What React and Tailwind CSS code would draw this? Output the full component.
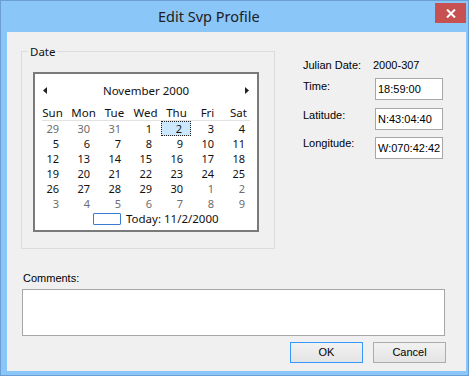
import React from "react";

const calFont = { fontFamily: '"Noto Sans", "Open Sans", sans-serif' };
const sysFont = { fontFamily: '"Liberation Sans", Arial, sans-serif' };

const dayNames = ["Sun", "Mon", "Tue", "Wed", "Thu", "Fri", "Sat"];

const weeks = [
  [[29, 1], [30, 1], [31, 1], [1, 0], [2, 2], [3, 0], [4, 0]],
  [[5, 0], [6, 0], [7, 0], [8, 0], [9, 0], [10, 0], [11, 0]],
  [[12, 0], [13, 0], [14, 0], [15, 0], [16, 0], [17, 0], [18, 0]],
  [[19, 0], [20, 0], [21, 0], [22, 0], [23, 0], [24, 0], [25, 0]],
  [[26, 0], [27, 0], [28, 0], [29, 0], [30, 0], [1, 1], [2, 1]],
  [[3, 1], [4, 1], [5, 1], [6, 1], [7, 1], [8, 1], [9, 1]],
];

function Calendar() {
  return (
    <div
      className="w-[226px] h-[160px] border-2 border-[#7a7a7a] bg-white text-[11px] text-[#111]"
      style={calFont}
    >
      <div className="h-[31px] pt-[2px] flex items-center justify-between px-[8px]">
        <svg width="4" height="7" viewBox="0 0 4 7">
          <path d="M4 0 L0 3.5 L4 7 Z" fill="#222" />
        </svg>
        <span className="leading-[15px] text-[11.5px]">November 2000</span>
        <svg width="4" height="7" viewBox="0 0 4 7">
          <path d="M0 0 L4 3.5 L0 7 Z" fill="#222" />
        </svg>
      </div>
      <div className="ml-[2px] grid grid-cols-[repeat(7,31px)] h-[15px] leading-[15px] text-[11.5px]">
        {dayNames.map((d) => (
          <div key={d} className="text-center">
            {d}
          </div>
        ))}
      </div>
      <div className="ml-[7px] w-[208px] h-px bg-[#e2e2e2]" />
      <div className="ml-[2px]">
        {weeks.map((w, i) => (
          <div key={i} className="grid grid-cols-[repeat(7,31px)] h-[15px] leading-[13px]">
            {w.map(([n, t], j) =>
              t === 2 ? (
                <div
                  key={j}
                  className="w-[30px] h-[15px] bg-[#cce8ff] border border-dotted border-[#222] text-right pr-[8px]"
                >
                  {n}
                </div>
              ) : (
                <div
                  key={j}
                  className={
                    "text-right pr-[9px] leading-[15px] " +
                    (t === 1 ? "text-[#6d6d6d]" : "text-[#111]")
                  }
                >
                  {n}
                </div>
              )
            )}
          </div>
        ))}
      </div>
      <div className="h-[15px] flex items-center pl-[58px] gap-[5px]">
        <div className="w-[28px] h-[12px] border border-[#3a7bd5] rounded-[1px]" />
        <span className="leading-[15px] text-[11.5px]">Today: 11/2/2000</span>
      </div>
    </div>
  );
}

function Field({ value }) {
  return (
    <div className="w-[68px] h-[22px] border border-[#a6a6a6] bg-white pl-[2px] flex items-center overflow-hidden whitespace-nowrap text-[11px] leading-[13px]">
      {value}
    </div>
  );
}

export default function App() {
  return (
    <div className="w-[470px] h-[385px] bg-white">
      <div className="w-[469px] h-[376px] bg-[#8bc6f8] border border-[#6b9fd3] flex flex-col">
        <div className="h-[31px] flex items-start">
          <div
            className="flex-1 h-[31px] flex items-center pl-[157px] text-[14.5px] text-[#202020]"
            style={calFont}
          >
            Edit Svp Profile
          </div>
          <div className="mt-[2px] mr-[2px] w-[31px] h-[20px] bg-[#c75050] flex items-center justify-center">
            <svg width="10" height="9" viewBox="0 0 10 9">
              <path d="M1 0.5 L9 8.5 M9 0.5 L1 8.5" stroke="white" strokeWidth="2" />
            </svg>
          </div>
        </div>
        <div
          className="ml-[6px] w-[459px] h-[339px] bg-[#f0f0f0] flex flex-col text-[11px] text-black"
          style={sysFont}
        >
          <div className="flex items-start">
            <fieldset className="ml-[14px] mt-[12px] w-[254px] h-[205px] border border-[#dcdcdc]">
              <legend
                className="ml-[6px] px-[2px] pt-[2px] leading-[12px] text-[11.5px] text-[#111]"
                style={calFont}
              >
                Date
              </legend>
              <div className="mt-[14px] ml-[11px]">
                <Calendar />
              </div>
            </fieldset>
            <div className="ml-[28px] mt-[27px] flex flex-col leading-[13px]">
              <div className="flex h-[13px]">
                <span className="w-[70px]">Julian Date:</span>
                <span>2000-307</span>
              </div>
              <div className="flex mt-[6px]">
                <span className="w-[72px] mt-[2px]">Time:</span>
                <Field value="18:59:00" />
              </div>
              <div className="flex mt-[8px]">
                <span className="w-[72px] mt-[1px]">Latitude:</span>
                <Field value="N:43:04:40" />
              </div>
              <div className="flex mt-[7px]">
                <span className="w-[72px]">Longitude:</span>
                <Field value="W:070:42:42" />
              </div>
            </div>
          </div>
          <div className="ml-[16px] mt-[23px] leading-[13px]">Comments:</div>
          <div className="ml-[15px] mt-[4px] w-[423px] h-[47px] border border-[#a6a6a6] bg-white" />
          <div className="mt-[6px] flex justify-end pr-[20px] gap-[10px]">
            <button className="w-[73px] h-[21px] border border-[#3399ff] bg-linear-to-b from-[#f2f2f2] to-[#e4e4e4] text-[11px] leading-[13px] text-black">
              OK
            </button>
            <button className="w-[73px] h-[21px] border border-[#acacac] bg-linear-to-b from-[#f2f2f2] to-[#e4e4e4] text-[11px] leading-[13px] text-black">
              Cancel
            </button>
          </div>
        </div>
      </div>
    </div>
  );
}
